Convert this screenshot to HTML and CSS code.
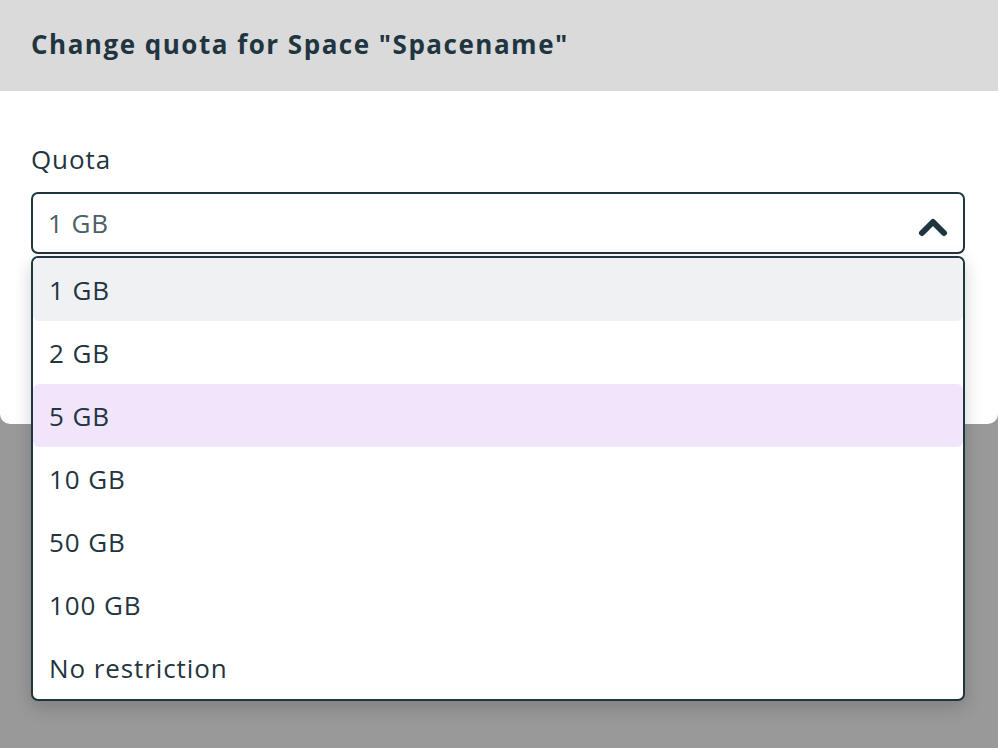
FILE: index.html
```html
<!DOCTYPE html>
<html lang="en">
<head>
<meta charset="utf-8">
<title>Change quota</title>
<link rel="stylesheet" href="styles.css">
</head>
<body>
<div class="modal">
  <div class="modal-header">
    <h2 class="modal-title">Change quota for Space "Spacename"</h2>
  </div>
  <div class="modal-body">
    <label class="field-label">Quota</label>
    <div class="select">
      <div class="select-control">
        <span class="select-value">1 GB</span>
        <svg class="chevron" width="30" height="20" viewBox="0 0 30 20"><path d="M4 16 L15 5 L26 16" fill="none" stroke="#1f3540" stroke-width="6" stroke-linecap="round" stroke-linejoin="round"/></svg>
      </div>
      <ul class="select-menu">
        <li class="option option-selected">1 GB</li>
        <li class="option">2 GB</li>
        <li class="option option-hover">5 GB</li>
        <li class="option">10 GB</li>
        <li class="option">50 GB</li>
        <li class="option">100 GB</li>
        <li class="option">No restriction</li>
      </ul>
    </div>
  </div>
</div>
</body>
</html>
```
FILE: styles.css
```css
html, body {
  margin: 0;
  padding: 0;
  height: 100%;
}
body {
  background: #999999;
  font-family: "Open Sans", "Liberation Sans", sans-serif;
  color: #1f3540;
}
.modal {
  width: 998px;
  height: 424px;
  background: #ffffff;
  border-radius: 0 0 10px 10px;
}
.modal-header {
  height: 91px;
  background: #dadada;
  display: flex;
  align-items: center;
  padding-left: 31px;
}
.modal-title {
  margin: 0;
  font-size: 26px;
  font-weight: 700;
  letter-spacing: 1.5px;
  color: #1f3540;
  position: relative;
  top: -2px;
}
.modal-body {
  padding: 52px 33px 0 31px;
}
.field-label {
  display: block;
  font-size: 26px;
  line-height: 32px;
  letter-spacing: 0.9px;
  margin-bottom: 17px;
  color: #1f3540;
}
.select {
  position: relative;
}
.select-control {
  box-sizing: border-box;
  height: 62px;
  border: 2px solid #1f3540;
  border-radius: 7px;
  display: flex;
  align-items: center;
  justify-content: space-between;
  padding: 0 15px 0 15px;
}
.select-value {
  font-size: 26px;
  letter-spacing: 0.9px;
  color: #4c5e68;
}
.chevron {
  display: block;
  margin-top: 8px;
}
.select-menu {
  position: absolute;
  top: 64px;
  left: 0;
  right: 0;
  margin: 0;
  padding: 0;
  list-style: none;
  box-sizing: border-box;
  border: 2px solid #1f3540;
  border-radius: 7px;
  background: #ffffff;
  box-shadow: 0 6px 18px rgba(0, 0, 0, 0.18);
}
.option {
  height: 63px;
  display: flex;
  align-items: center;
  padding-left: 16px;
  font-size: 26px;
  letter-spacing: 0.9px;
  color: #1f3540;
  border-radius: 6px;
}
.option-selected {
  background: #f0f1f3;
}
.option-hover {
  background: #f1e5fc;
}
```
